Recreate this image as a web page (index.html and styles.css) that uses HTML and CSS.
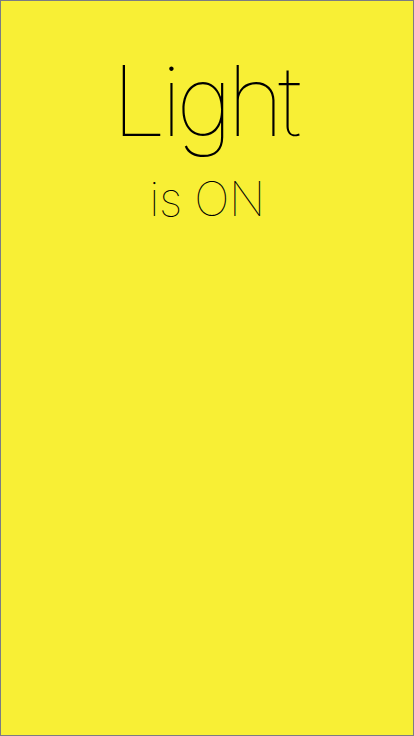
FILE: index.html
```html
<!DOCTYPE html>
<html>
<head>
<meta charset="utf-8">
<link rel="stylesheet" href="styles.css">
</head>
<body>
<div class="screen">
  <div class="title">Light</div>
  <div class="subtitle">is ON</div>
</div>
</body>
</html>
```
FILE: styles.css
```css
html, body {
  margin: 0;
  padding: 0;
}
.screen {
  box-sizing: border-box;
  width: 414px;
  height: 736px;
  border: 1px solid #7c7c82;
  background: #f8ef35;
  display: flex;
  flex-direction: column;
  align-items: center;
  font-family: "Inter", "Liberation Sans", sans-serif;
  font-weight: 100;
  color: #000;
}
.title {
  font-size: 97px;
  line-height: 1;
  margin-top: 51px;
  letter-spacing: -5.5px;
  padding-right: 6px;
}
.subtitle {
  font-size: 47px;
  line-height: 1;
  margin-top: 26px;
  letter-spacing: -0.5px;
}
```
